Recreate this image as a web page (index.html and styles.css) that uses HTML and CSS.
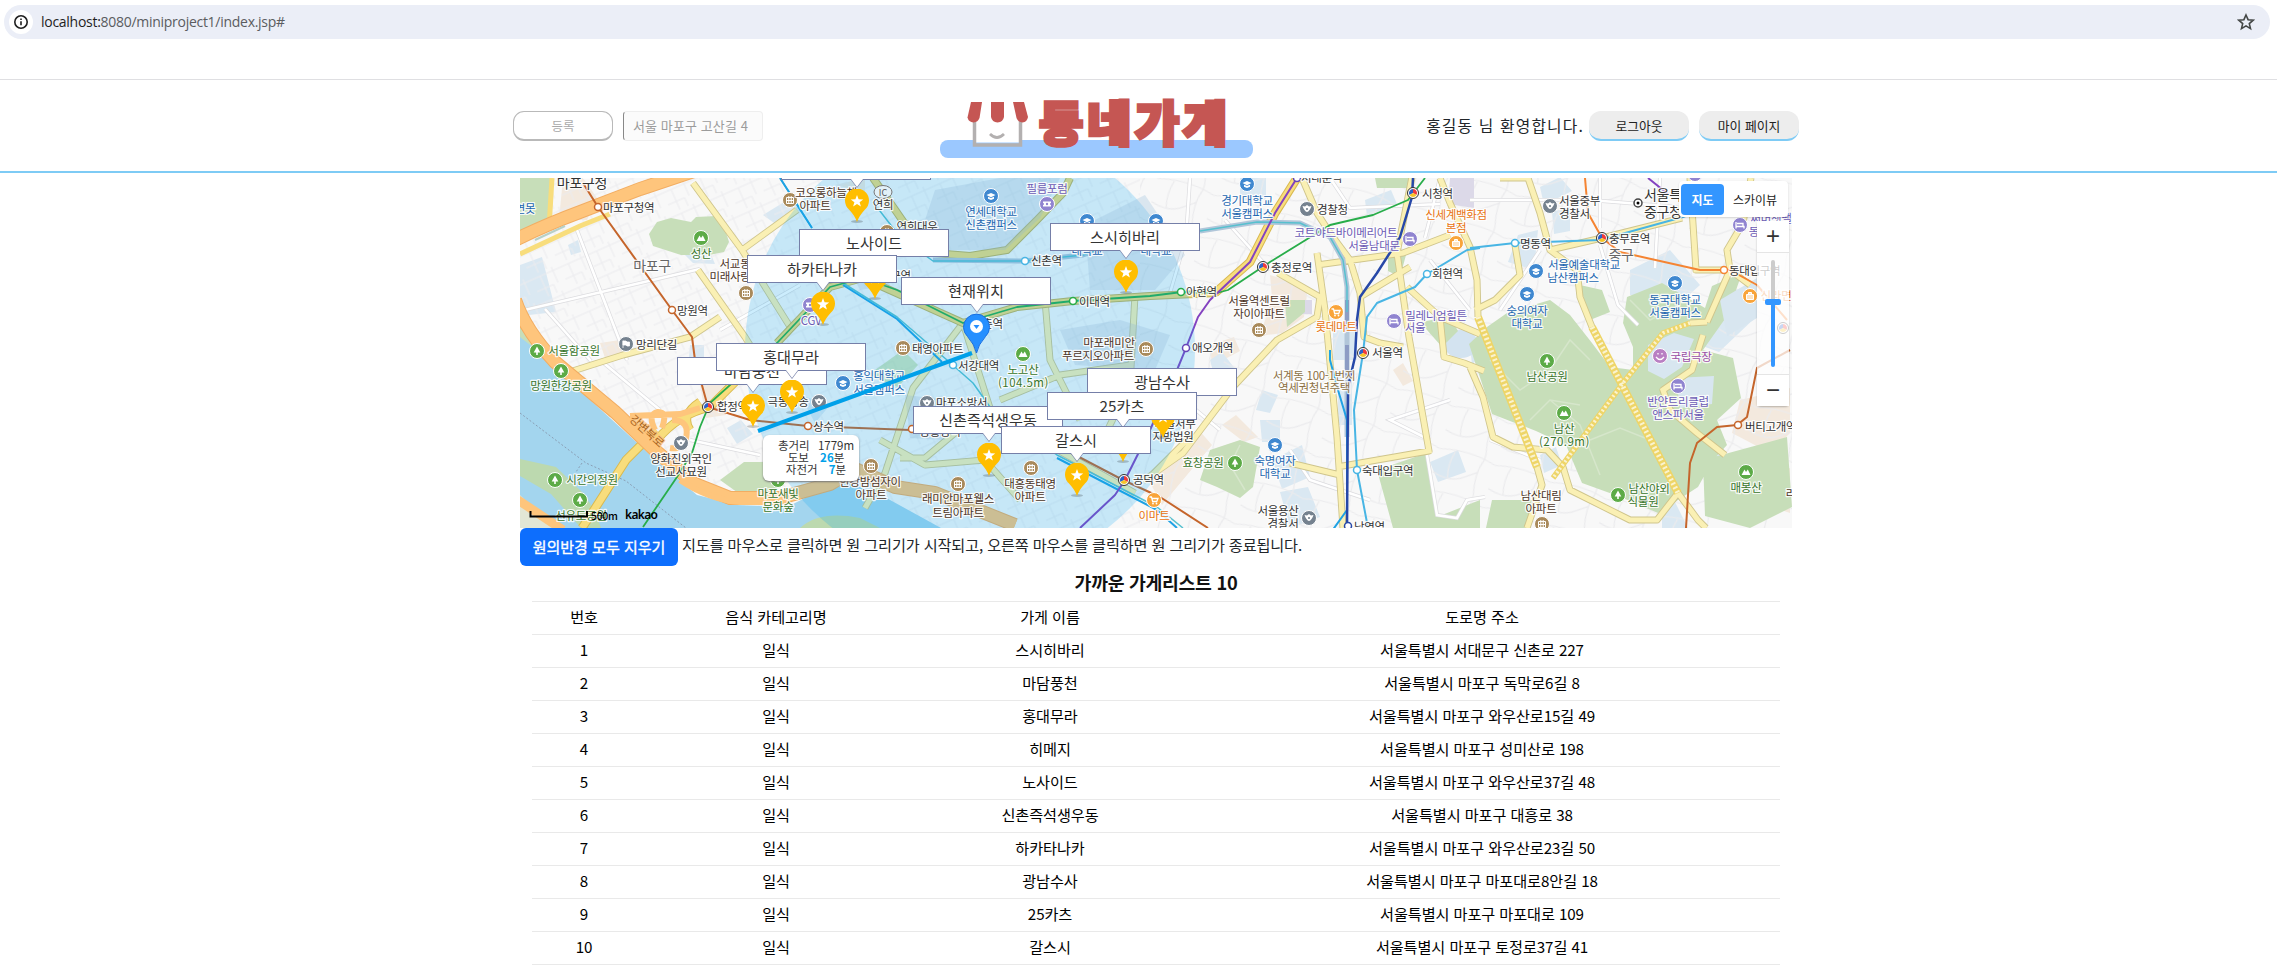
FILE: index.html
```html
<!DOCTYPE html>
<html lang="ko">
<head>
<meta charset="utf-8">
<title>동네가게</title>
<link rel="stylesheet" href="styles.css">
</head>
<body>
<div class="browser-bar">
  <div class="address">
    <span class="info"><svg width="16" height="16" viewBox="0 0 16 16"><circle cx="8" cy="8" r="6.2" fill="none" stroke="#1f1f1f" stroke-width="1.6"/><path d="M8 7.2v4M8 4.4v1.6" stroke="#1f1f1f" stroke-width="1.6"/></svg></span>
    <span class="url"><b>localhost:</b>8080/miniproject1/index.jsp#</span>
    <svg class="star" width="18" height="18" viewBox="0 0 18 18"><path d="M9 2l2.100 4.700 5.100.5-3.900 3.400 1.200 5L9 12.900 4.500 15.600l1.200-5L1.800 7.200l5.100-.5z" fill="none" stroke="#444746" stroke-width="1.600"/></svg>
  </div>
</div>
<header class="site-header">
  <div class="header-inner">
    <div class="left">
      <button class="btn-add">등록</button>
      <div class="addr-input">서울 마포구 고산길 4</div>
    </div>
    <svg class="logo" width="314" height="60" viewBox="940 100 314 60">
      <rect x="940" y="140" width="313" height="18" rx="8" fill="#9bc8ff"/>
      <rect x="976" y="120" width="43" height="22.500" fill="#fff"/>
      <path d="M974.500 120v25h46v-25" fill="none" stroke="#b3b0b0" stroke-width="3.500"/>
      <path d="M990 134q7 7 14 0" fill="none" stroke="#b3b0b0" stroke-width="2.800"/>
      <g fill="#c55653"><path d="M971 102h11l-2.500 16q-1.500 4-6 4.500-5-.5-6-5z"/><path d="M991 102h13v15q-1 5-6.500 5.500-5.500-.5-6.500-5.500z"/><path d="M1013 102h11l4 15q-1 5-5.500 5.500-4.500-.5-6-4.500z"/></g>
      <text class="logo-text" x="1039" y="141" textLength="188">동네가게</text>
    </svg>
    <div class="right">
      <span class="welcome">홍길동 님 환영합니다.</span>
      <button class="btn-pill">로그아웃</button>
      <button class="btn-pill">마이 페이지</button>
    </div>
  </div>
</header>
<main class="content">
<div class="map">
<svg class="map-canvas" width="1272" height="350" viewBox="520 178 1272 350">
  <defs>
    <pattern id="st1" width="31" height="26" patternUnits="userSpaceOnUse" patternTransform="rotate(-24)"><path d="M0 4H31M0 17H18M9 4V26M23 0V17M18 17V26" fill="none" stroke="#ebebee" stroke-width="1"/></pattern>
    <pattern id="st2" width="58" height="44" patternUnits="userSpaceOnUse" patternTransform="rotate(17)"><path d="M0 8Q30 0 58 8M0 32Q20 38 32 28M16 6Q12 20 16 34M46 0V6Q40 22 46 44M32 28L43 20" fill="none" stroke="#ebebed" stroke-width="1.200"/></pattern>
    <g id="school"><circle r="7.500" fill="#3f88d0" stroke="#fff"/><path d="M-4.500-1L0-3 4.500-1 0 1.200zM-3 .7v2L0 4l3-1.300v-2L0 2z" fill="#fff"/></g>
    <g id="apt"><circle r="7.500" fill="#a98a5b" stroke="#fff"/><path d="M-3.500-2.500h7v6h-7zM-1.200-4v7.500M1.200-4v7.500M-3.500.5h7" fill="none" stroke="#fff"/></g>
    <g id="tree"><circle r="7.500" fill="#5cab47" stroke="#fff"/><path d="M0-4.500L3.300 1.500H.8v2.500H-.8V1.500h-2.500z" fill="#fff"/></g>
    <g id="hill"><circle r="7.500" fill="#5cab47" stroke="#fff"/><path d="M-4.500 3L-1.500-2.500 0 0 1.800-2.500 4.500 3z" fill="#fff"/></g>
    <g id="cart"><circle r="7.500" fill="#f9a43a" stroke="#fff"/><path d="M-4.500-3h2l1.200 4.500h4L4-1.500h-6" fill="none" stroke="#fff" stroke-width="1.300"/><circle cx="-1" cy="3.500" r=".9" fill="#fff"/><circle cx="2.500" cy="3.500" r=".9" fill="#fff"/></g>
    <g id="bag"><circle r="7.500" fill="#f9a43a" stroke="#fff"/><path d="M-3.500-1.500h7v5h-7zM-1.500-1.500v-2h3v2" fill="#fff" stroke="#fff" fill-opacity=".7"/></g>
    <g id="bed"><circle r="7.500" fill="#9084d0" stroke="#fff"/><path d="M-4-3v6.500M-4 1.500h8v2M-3-1.500h6V1" fill="none" stroke="#fff" stroke-width="1.300"/></g>
    <g id="police"><circle r="7.500" fill="#75828f" stroke="#fff"/><path d="M-4.500-3l2.500.5L0-4 2-2.500l2.500-.5-1 2.500L2.500 1Q0 5-2.500 1l-1-1.500z" fill="#fff"/><circle r="1.100" fill="#75828f"/></g>
    <g id="flag"><circle r="7.500" fill="#75828f" stroke="#fff"/><path d="M-3-3.500v7.500M-3-3h3l1 1h2.500v4H1l-1-1h-3z" fill="#fff" stroke="#fff" stroke-width=".8"/></g>
    <g id="ticket"><circle r="7.500" fill="#9084d0" stroke="#fff"/><path d="M-4-2.500h8v1.500a1 1 0 0 0 0 2v1.500h-8V1a1 1 0 0 0 0-2z" fill="#fff"/><circle r="1.200" fill="#9084d0"/></g>
    <g id="hub"><circle r="5.500" fill="#fff" stroke="#333"/><path d="M0-4A4 4 0 0 0-3.500 2L0 0z" fill="#2c62c9"/><path d="M0-4A4 4 0 0 1 3.500 2L0 0z" fill="#ee3b3b"/><path d="M3.500 2A4 4 0 0 1-3.500 2L0 0z" fill="#f6c426"/></g>
  </defs>
  <rect x="520" y="178" width="1272" height="350" fill="#f8f8f8"/>
  <!-- land use -->
  <g fill="#f3e9de"><path d="M563 178h20l14 20-10 22h-28zM700 385h26v30l-20 3zM600 343l20-3 10 15-25 3zM835 185l30-7v14zM1270 275l38 12-4 30-22 16-22 3 12-38zM1210 345l24-8 6 14-28 15zM1168 455l30-26 14 16-50 60-16-30zM1740 400l50-12v45l-20 20-38-20zM1760 478l30-10v45l-30-10zM1222 425l14-10 22 22-14 5zM1393 370l10-7 10 18-10 5z"/></g>
  <g fill="#dae8f2"><path d="M520 265l22-8 14 55-36 4zM568 245l10-5 3 12-10 3zM763 215l26-16 14 12-26 14zM680 250l30 2 5 12-22-1zM727 428l14-8 12 14-16 10zM690 345h14v25h-16zM800 395l30 10-15 18zM1240 178h26v22h-26zM1365 200l26-10 6 14-30 12zM1333 325h24v35h-24zM1338 370h14v55h-14zM1262 390l16 5-8 18-14-3zM1260 420h20v22h-18zM1272 460l30-15 8 32-28 12zM1280 492l28-5 12 30-30 11zM1210 360l12-8 14 18-22 5zM1430 462l28-12 8 22-28 10zM1518 235l20-5-4 40-26-8zM1552 212l18-5v24l-16 3zM1630 270l40-20 30 35-20 18-50-8zM1735 290l22-6v32l-38 36-22-8 22-26zM1661 350l26-12 8 14-28 40-14-20 20-6zM1690 380l24 0-4 30-30 3-10-25zM1700 445l18-8 10 20-22 8zM1662 505l12-5 14 28h-26zM1540 455l16-8 6 18-18 8zM1470 345l12 8-10 12zM1540 187l20-10 12 14-28 14z"/></g>
  <rect x="520" y="178" width="620" height="350" fill="url(#st1)"/>
  <rect x="1140" y="178" width="652" height="350" fill="url(#st2)"/>
  <ellipse cx="1461" cy="344" rx="17" ry="14" fill="#d3e3f0"/>
  <g fill="#dcd9e8"><path d="M1450 178h24v30l-26-4zM1300 300h12v14h-12z"/></g>
  <g fill="#c7deb9"><path d="M520 178h32v52l-32 10zM520 325l20 10 15 25-35-18zM657 222l14-4 20 4 5-5 20-1 8 10 5 16-5 10-15 3-28 0-28-9-4-12zM1375 178h38v10h-36zM1388 255h18l-6 22-12-6zM1285 300h20v12l-18 15zM1420 322l30-5 8 14-16 16zM720 480l24-18h30l4 32-30 6zM1200 480l10-30 30-10 20 7-7 40-13 11-23-11zM1377 470l50-17 10 64 43-17v28h-87zM1487 327l20-14 43-13 20 15 22 28 18 24 23 3v-23l-10-24 4-26 35-14 43 25 7-22 30-13-15 43-24 34 30 8 8 40-24 22 10 25-14 15-15 27-40 26-40-17-36-13-16-38-30-14-44-17-23-70zM1703 460l84-23 5 70-42 21-45-12zM1492 500h40l-6 28h-40zM1580 285l22 5 8 22-20 8z"/></g>
  <g fill="none" stroke="#d6e6cb" stroke-width="1.500"><path d="M1490 360l30 30 30-20 20-30 20 20M1550 400l30 25 20 50M1630 300l20 20 30-15M1240 445l-10 20 15 25M1530 420l20-20 30 5M1590 440l30-12 25 10"/></g>
  <g fill="#d8e6f0"><path d="M1648 345l26-12 20 6-12 28-18 12-16-8zM1676 378l38-2-2 28-32 4zM1720 300l37-22v40l-30 18z"/></g>
  <!-- river and islands -->
  <path d="M520 337l23 18 44 42 46 42 26 24 38 32 40 10 50 2 54-27 40 15 60 33H520z" fill="#a3d5ee"/>
  <path d="M520 459l36 8 27 26 12 18 6 17h-20l-30-34-31-18zM800 528q20-18 60-10l20 10z" fill="#bcd9af"/>
  <path d="M520 495l34 33h-34z" fill="#e2e6d5"/>
  <g fill="none" stroke="#8a9fb5" stroke-dasharray="2 2"><path d="M520 413l66 50 40 18 60 47M582 463l-8 12"/></g>
  <!-- minor roads -->
  <defs><path id="minor" d="M520 311l180-42M545 309l46 52M577 230l50 130M600 360l60 50M720 330l80-45M690 440l70 15M1440 178l-15 60M1470 200h120l100 8M1330 178l20 30 90-4M1600 178v50M1660 178l-5 90M1490 440l50 20M1190 178l-4 60-16 55M1225 220l45 50M1160 380l60 50M1290 450l20 30 60 20M1430 260l40 50M1540 250l-40 60M1450 400l-60 20 40 20M1427 455l10 60 20 3 10-18 18-3M1600 245l18 60 20 20"/></defs>
  <use href="#minor" fill="none" stroke="#dcdcdf" stroke-width="4"/>
  <use href="#minor" fill="none" stroke="#fff" stroke-width="2.600"/>
  <!-- main roads: casing then fill -->
  <g fill="none" stroke="#cfc58c" stroke-width="7" stroke-linejoin="round"><path id="roads" d="M693 183l49 67 55-40M742 250l50 80M698 270l47 67 25 40M560 375l63-20 67-18 30-20M963 323l-50 65-28 85-20 35M963 323l27 85 55 35 90 50M880 440l45 25 60-5 35 40M985 408l-60 50-25 0M1000 400l60-25 70-10M1045 300l5 60 30 60M1135 295l-5 90-30 60M1302 178l15 35 13 20 20 27 10 33 4 44 16 6 23 4M1317 265l86-12 47-18M1278 273l42 24-3 20-40 23-44 47-50 66-40 28M1317 253l8 57 12 127 6 91M1290 463l50 12M1337 467l92-16-20-114-12-84 15-76M1360 297l50-30M1407 287l33 30 40 17M1440 317l4 40 20 6 20 8M1450 203l20 44 7 33 1 37M1450 203l-10-25M1537 467l5 18-15 43M1528 178l12 35 10 37 27 20 3 27 12 30M1550 250l52-12 80-20M1678 493l20 27 8 8M1707 322l-17 1M1707 322l23-52-3-20 16-27 8-45M1690 178l6 92 34 0 20 15M1703 335l-11 35-29 20 7 20 27 23 28 22M1470 367l13 30 10 40 20 10 34 3 16 17 7 23 60 30 27 0 21-27M1530 178l-30 0M1515 245l5 30-25 25-20 10M1150 477l40-40"/></g>
  <use href="#roads" fill="none" stroke="#faf0b4" stroke-width="5.200"/>
  <g fill="none" stroke="#c3b45c" stroke-width="8"><path id="avenue" d="M777 343l53-56 33-9 100 45 54-16 56-6 77-5 67-3M873 178l34 49 26 26 37 3 37-6 30-30 26-27 7-15"/></g>
  <use href="#avenue" fill="none" stroke="#f0dc7c" stroke-width="6"/>
  <g fill="none" stroke="#eed568"><path d="M1478 317l59 150M1592 327l86 166" stroke-width="8"/><path d="M1690 323l-27 10-40 50-70 95" stroke-width="5.500"/></g>
  <g fill="none" stroke="#faf3cf" stroke-dasharray="2 2.500"><path d="M1478 317l59 150M1592 327l86 166" stroke-width="5"/><path d="M1690 323l-27 10-40 50-70 95" stroke-width="3.500"/></g>
  <g fill="none" stroke="#d8b950" stroke-width="9"><path id="trunk" d="M1297 178l-22 35-25 49-35 31M656 430l-30 30-32 50-12 18M657 440q20-25 53-33l60-60M690 430q-10-15 10-28"/></g>
  <use href="#trunk" fill="none" stroke="#f8dd7c" stroke-width="7"/>
  <path d="M520 254l60-28 30-12M552 178l-3 50M520 500l45 32" fill="none" stroke="#f8dd7c" stroke-width="5"/>
  <g fill="none" stroke="#f2ad62" stroke-width="14"><path id="ex" d="M515 240q30-15 65-28l60-23 60-20M515 300q10 30 40 62l60 50 42 40 38 32 35 14h50l50-14 25-15 40 18 40 6 50 20 30 12"/></g>
  <use href="#ex" fill="none" stroke="#fec57c" stroke-width="12"/>
  <path d="M515 498l30 20 18 12" fill="none" stroke="#fec57c" stroke-width="9"/>
  <path d="M680 480q30 20 60 22h30M630 416l50-2 20-6M655 430q-8-16 3-18 10 0 4 16M672 420q18 0 14 18-4 12-16 10" fill="none" stroke="#fec57c" stroke-width="6"/>
  <path d="M535 240l30-14" stroke="#b7d0c6" stroke-width="2"/>
  <!-- rail -->
  <g fill="none" stroke-linejoin="round">
    <path d="M1200 231l57-9 43 1 30 14 13 23 4 27v150M933 260l92 1 58-6 60-20 57-4" stroke="#b1c6d9" stroke-width="5"/>
    <path d="M1347 300v30M1347 345v30" stroke="#8c9cc4" stroke-width="4"/>
    <path d="M780 178l32 50M873 202l27 35 33 24 92 0 58-6 60-20 57-4 57-9 43 1 30 14 13 23 4 27v25M843 283l54 34 50 43 26 23 17 24 67 48 100 52 26 21" stroke="#57c0cf" stroke-width="1.500"/>
    <path d="M780 178l32 50M843 285l54 34 45 43M1330 350v10l8 30 9 30v90l-20 28M1057 458l100 52 20 18" stroke="#1fa2e4" stroke-width="2"/>
    <path d="M1413 178l-1 19-12 40-23 36-17 24-3 23-2 37-7 30-1 141" stroke="#2748a8" stroke-width="2.500"/>
    <path d="M1425 178l-17 22-35 15-43 10-60 37-42 28-11 3-35-1-32 4-77 5-56 6-54 16-66-33-34-12-33 9-53 56-67 60-10 24-8 26-15 24-34 50" stroke="#28ad4a" stroke-width="1.800"/>
    <path d="M1297 178l-22 35-25 49-40 38-12 17-12 31-9 22-27 60-25 50-10 15-35 33M1648 178l20 16" stroke="#8442c0" stroke-width="2"/>
    <path d="M1480 248l-13 2-40 24-12 13-38 16-10 14-4 36-9 57 3 60 11 58M1470 248l45-5 85-3 83-23 30-12" stroke="#48b5e4" stroke-width="2"/>
    <path d="M1585 178l3 35 14 25 18 14 80 18h30l27 15 30 35" stroke="#f58432" stroke-width="2"/>
    <path d="M1790 350l-33 18-10 49-10 8-20 2-20 16-7 20-4 65M583 183l15 24 74 103 20 27 3 23 13 47 42 13 58 6 102 4M1060 447l63 33 37 17 48 31" stroke="#c5652b" stroke-width="2"/>
  </g>
  <!-- search radius and walking line -->
  <circle cx="970" cy="350" r="225" fill="#00a6f5" fill-opacity=".2"/>
  <g fill="#8db8d8" fill-opacity=".28"><path d="M935 190l65-12 60 0-20 40-35 32-60 0-20-30zM1085 225l60-30 40 60-30 35-65 0zM1060 330l60-10 50 15-15 35-80-5zM905 395l45 5-5 40-35-2zM850 270l30-5 10 20-30 5z"/></g>
  <path d="M868 375l35-25 15 15-20 22z" fill="#86c99c" fill-opacity=".5"/>
  <!-- stations -->
  <g fill="#fff" stroke-width="1.500"><g stroke="#c5652b"><circle cx="598" cy="207" r="3.500"/><circle cx="672" cy="310" r="3.500"/><circle cx="808" cy="426" r="3.500"/><circle cx="912" cy="429" r="3.500"/><circle cx="1738" cy="425" r="3.500"/></g><g stroke="#28ad4a"><circle cx="1073" cy="301" r="3.500"/><circle cx="1181" cy="292" r="3.500"/></g><g stroke="#48b5e4"><circle cx="1025" cy="261" r="3.500"/><circle cx="953" cy="365" r="3.500"/><circle cx="1427" cy="274" r="3.500"/><circle cx="1515" cy="243" r="3.500"/><circle cx="1357" cy="470" r="3.500"/></g><g stroke="#6644b8"><circle cx="1186" cy="348" r="3.500"/><circle cx="1297" cy="178" r="3.500"/></g><circle cx="1348" cy="526" r="3.500" stroke="#2748a8"/><circle cx="1724" cy="270" r="3.500" stroke="#f58432"/><circle cx="1638" cy="203" r="4" stroke="#444"/></g><circle cx="1638" cy="203" r="1.500"/>
  <use href="#hub" x="708" y="407"/><use href="#hub" x="1124" y="480"/><use href="#hub" x="1263" y="267"/><use href="#hub" x="1413" y="193"/><use href="#hub" x="1363" y="353"/><use href="#hub" x="1602" y="238"/><use href="#hub" x="1783" y="328"/>
  <!-- points of interest -->
  <use href="#hill" x="701" y="238"/><use href="#apt" x="790" y="200"/><use href="#apt" x="746" y="293"/><use href="#tree" x="537" y="351"/><use href="#tree" x="561" y="371"/><use href="#tree" x="555" y="480"/><use href="#tree" x="580" y="500"/><use href="#flag" x="626" y="344"/><use href="#police" x="681" y="443"/><use href="#ticket" x="810" y="305"/><use href="#tree" x="778" y="480"/>
  <use href="#school" x="991" y="196"/><use href="#ticket" x="1047" y="204"/><use href="#school" x="1087" y="221"/><use href="#school" x="1156" y="221"/><use href="#apt" x="903" y="348"/><use href="#hill" x="1023" y="354"/><use href="#apt" x="1146" y="349"/><use href="#school" x="843" y="383"/><use href="#police" x="819" y="402"/><use href="#police" x="927" y="403"/><use href="#apt" x="871" y="466"/><use href="#apt" x="958" y="484"/><use href="#apt" x="1031" y="468"/><use href="#cart" x="1154" y="500"/><use href="#apt" x="887" y="232"/>
  <use href="#school" x="1247" y="184"/><use href="#police" x="1307" y="209"/><use href="#bed" x="1410" y="239"/><use href="#bag" x="1456" y="243"/><use href="#cart" x="1336" y="312"/><use href="#bed" x="1394" y="321"/><use href="#apt" x="1259" y="330"/><use href="#school" x="1275" y="445"/><use href="#tree" x="1235" y="463"/><use href="#police" x="1309" y="518"/>
  <use href="#police" x="1550" y="206"/><use href="#school" x="1536" y="271"/><use href="#school" x="1527" y="294"/><use href="#school" x="1675" y="283"/><use href="#bag" x="1750" y="296"/><use href="#bed" x="1740" y="225"/><use href="#bed" x="1695" y="174"/><use href="#tree" x="1547" y="361"/><use href="#hill" x="1564" y="413"/><use href="#bed" x="1678" y="386"/><use href="#tree" x="1618" y="495"/><use href="#hill" x="1746" y="472"/><use href="#apt" x="1542" y="524"/>
  <circle cx="1660" cy="356" r="7.500" fill="#b97fc3" stroke="#fff"/><path d="M1656 357q4 5 8 0M1658 353v1.500M1662 353v1.500" fill="none" stroke="#fff" stroke-width="1.300"/>
  <ellipse cx="883" cy="192" rx="9" ry="6.500" fill="#e2f1f8" stroke="#777"/><text class="ic" x="883" y="195.500">IC</text>
  <!-- labels -->
  <g class="labels">
    <text class="big" x="582" y="188">마포구청</text><text class="big gray" x="652" y="271">마포구</text><text class="big gray" x="1621" y="260">중구</text>
    <g class="s"><text x="603" y="212">마포구청역</text><text x="677" y="315">망원역</text><text x="636" y="349">망리단길</text><text x="717" y="411">합정역</text><text x="813" y="431">상수역</text><text x="1031" y="265">신촌역</text><text x="1079" y="306">이대역</text><text x="972" y="328">신촌역</text><text x="958" y="370">서강대역</text><text x="1186" y="296">아현역</text><text x="1192" y="352">애오개역</text><text x="1133" y="484">공덕역</text><text x="1271" y="272">충정로역</text><text x="1317" y="214">경찰청</text><text x="1422" y="198">시청역</text><text x="1432" y="278">회현역</text><text x="1372" y="357">서울역</text><text x="1362" y="475">숙대입구역</text><text x="1354" y="531">남영역</text><text x="1301" y="182">서대문역</text><text x="1520" y="248">명동역</text><text x="1609" y="243">충무로역</text><text x="1729" y="275">동대입구역</text><text x="1745" y="431">버티고개역</text><text x="912" y="353">태영아파트</text><text x="936" y="407">마포소방서</text><text x="1559" y="205">서울중부</text><text x="1559" y="218">경찰서</text></g>
    <text class="s big" x="1644" y="200">서울특별시</text><text class="s big" x="1644" y="217">중구청</text>
    <g class="m"><text x="1175" y="428">서울서부</text><text x="1173" y="441">지방법원</text><text x="681" y="463">양화진외국인</text><text x="681" y="476">선교사묘원</text><text x="1278" y="515">서울용산</text><text x="1283" y="528">경찰서</text><text x="788" y="406">극동방송</text><text x="883" y="209">연희</text><text x="917" y="231">연희대우</text><text x="885" y="280">홍대입구역</text><text x="940" y="436">광흥창역</text></g>
    <g class="m brown"><text x="826" y="197">코오롱하늘채</text><text x="815" y="210">아파트</text><text x="735" y="268">서교동</text><text x="730" y="281">미래사랑</text><text x="1109" y="347">마포래미안</text><text x="1098" y="360">푸르지오아파트</text><text x="870" y="486">한강밤섬자이</text><text x="871" y="499">아파트</text><text x="958" y="503">래미안마포웰스</text><text x="958" y="517">트림아파트</text><text x="1030" y="488">대흥동태영</text><text x="1030" y="501">아파트</text><text x="1259" y="305">서울역센트럴</text><text x="1259" y="318">자이아파트</text><text x="1541" y="500">남산대림</text><text x="1541" y="513">아파트</text><text x="1791" y="498">라</text></g>
    <g class="m tan"><text x="1314" y="380">서계동 100-1번지</text><text x="1314" y="392">역세권청년주택</text></g>
    <g class="m green"><text x="701" y="258">성산</text><text x="574" y="355">서울함공원</text><text x="561" y="390">망원한강공원</text><text x="592" y="484">시간의정원</text><text x="581" y="520">선유도공원</text><text x="778" y="498">마포새빛</text><text x="778" y="511">문화숲</text><text x="1023" y="374">노고산</text><text x="1023" y="387" textLength="50">(104.5m)</text><text x="1203" y="467">효창공원</text><text x="1547" y="381">남산공원</text><text x="1564" y="433">남산</text><text x="1564" y="446" textLength="50">(270.9m)</text><text x="1649" y="493">남산야외</text><text x="1643" y="506">식물원</text><text x="1746" y="492">매봉산</text></g>
    <g class="m blue"><text x="525" y="213">연못</text><text x="991" y="216">연세대학교</text><text x="991" y="229">신촌캠퍼스</text><text x="879" y="380">홍익대학교</text><text x="879" y="394">서울캠퍼스</text><text x="1087" y="255">대학교</text><text x="1156" y="255">대학교</text><text x="1247" y="205">경기대학교</text><text x="1247" y="218">서울캠퍼스</text><text x="1275" y="465">숙명여자</text><text x="1275" y="478">대학교</text><text x="1584" y="269">서울예술대학교</text><text x="1573" y="282">남산캠퍼스</text><text x="1527" y="315">숭의여자</text><text x="1527" y="328">대학교</text><text x="1675" y="304">동국대학교</text><text x="1675" y="317">서울캠퍼스</text></g>
    <g class="m purple"><text x="1047" y="193">필름포럼</text><text x="811" y="325">CGV</text><text x="1346" y="237">코트야드바이메리어트</text><text x="1374" y="250">서울남대문</text><text x="1436" y="320">밀레니엄힐튼</text><text x="1415" y="332">서울</text><text x="1691" y="361" class="pink">국립극장</text><text x="1678" y="406">반얀트리클럽</text><text x="1678" y="419">앤스파서울</text><text x="1771" y="223">써머셋팰</text><text x="1754" y="236">동</text></g>
    <g class="m orange"><text x="1456" y="219">신세계백화점</text><text x="1456" y="232">본점</text><text x="1336" y="331">롯데마트</text><text x="1154" y="520">이마트</text><text x="1776" y="300">신라면</text></g>
    <text class="m road" transform="translate(644 434) rotate(42)">강변북로</text>
  </g>
  <path d="M758 431L972 353" stroke="#00a0e9" stroke-width="4"/>
  <path d="M530.500 511v5.500H587V511" fill="none" stroke="#000" stroke-width="2"/>
  <text x="591" y="520" class="scale-text">500m</text>
  <text x="625" y="519" class="kakao" textLength="33">kakao</text>
  <symbol id="pin" viewBox="0 0 24 34" width="24" height="34"><ellipse cx="12" cy="32.500" rx="6" ry="1.500" fill="#000" opacity=".2"/><path d="M12 33Q10 27 4 20.500A12 12 0 1 1 20 20.500Q14 27 12 33z" fill="#ffbe00"/><path d="M12 6l1.600 4.200 4.600.2-3.600 2.800 1.300 4.400-3.900-2.500-3.900 2.500 1.300-4.400-3.600-2.800 4.600-.2z" fill="#fff"/></symbol>
</svg>
  <div class="place" style="left:261px;top:-26px"><span>히메지</span><svg><use href="#pin"/></svg></div>
  <div class="place" style="left:279px;top:51px"><span>노사이드</span><svg><use href="#pin"/></svg></div>
  <div class="place" style="left:227px;top:77px"><span>하카타나카</span><svg><use href="#pin"/></svg></div>
  <div class="place" style="left:530px;top:45px"><span>스시히바리</span><svg><use href="#pin"/></svg></div>
  <div class="place" style="left:157px;top:179px"><span>마담풍천</span><svg><use href="#pin"/></svg></div>
  <div class="place" style="left:196px;top:165px"><span>홍대무라</span><svg><use href="#pin"/></svg></div>
  <div class="place" style="left:393px;top:228px"><span>신촌즉석생우동</span><svg><use href="#pin"/></svg></div>
  <div class="place" style="left:567px;top:190px"><span>광남수사</span><svg><use href="#pin"/></svg></div>
  <div class="place" style="left:527px;top:214px"><span>25카츠</span><svg><use href="#pin"/></svg></div>
  <div class="place" style="left:481px;top:248px"><span>갈스시</span><svg><use href="#pin"/></svg></div>
  <div class="place here" style="left:381px;top:99px"><span>현재위치</span><svg viewBox="0 0 27 41"><path d="M13.500 40Q12 32 4.500 23.500A13 13 0 1 1 22.500 23.500Q15 32 13.500 40z" fill="#258fff" stroke="#1a6fe0"/><circle cx="13.500" cy="13.500" r="6.500" fill="#fff"/><path d="M10.500 12h6l-3 4z" fill="#258fff"/></svg></div>
  <div class="distance"><p>총거리 <span>1779m</span></p><p>도보 <b>26</b>분</p><p>자전거 <b>7</b>분</p></div>
  <div class="map-type"><span class="on">지도</span><span>스카이뷰</span></div>
  <div class="zoom"><div class="zbtn">+</div><div class="track"><i></i><em></em></div><div class="zbtn">−</div></div>
</div>
<div class="actions"><button class="btn-primary">원의반경 모두 지우기</button><span>지도를 마우스로 클릭하면 원 그리기가 시작되고, 오른쪽 마우스를 클릭하면 원 그리기가 종료됩니다.</span></div>
<h2 class="list-title">가까운 가게리스트 10</h2>
<table class="shops">
  <colgroup><col class="c1"><col class="c2"><col class="c3"><col></colgroup>
  <tr><td>번호</td><td>음식 카테고리명</td><td>가게 이름</td><td>도로명 주소</td></tr>
  <tr><td>1</td><td>일식</td><td>스시히바리</td><td>서울특별시 서대문구 신촌로 227</td></tr>
  <tr><td>2</td><td>일식</td><td>마담풍천</td><td>서울특별시 마포구 독막로6길 8</td></tr>
  <tr><td>3</td><td>일식</td><td>홍대무라</td><td>서울특별시 마포구 와우산로15길 49</td></tr>
  <tr><td>4</td><td>일식</td><td>히메지</td><td>서울특별시 마포구 성미산로 198</td></tr>
  <tr><td>5</td><td>일식</td><td>노사이드</td><td>서울특별시 마포구 와우산로37길 48</td></tr>
  <tr><td>6</td><td>일식</td><td>신촌즉석생우동</td><td>서울특별시 마포구 대흥로 38</td></tr>
  <tr><td>7</td><td>일식</td><td>하카타나카</td><td>서울특별시 마포구 와우산로23길 50</td></tr>
  <tr><td>8</td><td>일식</td><td>광남수사</td><td>서울특별시 마포구 마포대로8안길 18</td></tr>
  <tr><td>9</td><td>일식</td><td>25카츠</td><td>서울특별시 마포구 마포대로 109</td></tr>
  <tr><td>10</td><td>일식</td><td>갈스시</td><td>서울특별시 마포구 토정로37길 41</td></tr>
</table>
</main>
</body>
</html>
```
FILE: styles.css
```css
* { box-sizing: border-box; }
body { margin: 0; background: #fff; color: #212529; font-family: "Noto Sans CJK KR", sans-serif; font-size: 15.3px; overflow: hidden; }
button { font-family: inherit; padding: 0; }
.browser-bar { height: 80px; padding: 5px 7px 0 4px; border-bottom: 1px solid #dfdfe2; }
.address { display: flex; align-items: center; height: 34px; border-radius: 17px; background: #ebeef7; padding: 0 15px 0 5px; }
.info { width: 24px; height: 24px; border-radius: 50%; background: #fff; display: grid; place-items: center; }
.url { flex: 1; margin-left: 8px; padding-bottom: 1px; font: 14px "Open Sans", "Noto Sans", sans-serif; letter-spacing: -.28px; color: #5a5c60; }
.url b { font-weight: 400; color: #1f1f1f; }
.site-header { height: 93px; border-bottom: 2px solid #7ecbf5; }
.header-inner { width: 1286px; margin-left: 513px; height: 91px; padding-top: 20px; display: grid; grid-template-columns: 427px 314px 1fr; }
.left { display: flex; gap: 10px; padding-top: 11px; }
.btn-add { width: 100px; height: 30px; border: 1px solid #b9b9b9; border-width: 1px 1px 2px; border-radius: 11px; background: #fff; color: #aaa; font-size: 12.500px; }
.addr-input { width: 140px; height: 30px; border: 1px solid #eee; border-left-color: #888; border-radius: 4px; background: #fbfbfb; color: #9b9b9b; font-size: 13px; line-height: 28px; padding-left: 9px; letter-spacing: .1px; white-space: nowrap; }
.logo { display: block; overflow: visible; }
.logo-text { font-size: 48px; font-weight: 900; fill: #c55653; stroke: #c55653; stroke-width: 3.500px; }
.right { display: flex; justify-content: flex-end; gap: 10px; padding-top: 11px; }
.welcome { font-size: 15.800px; line-height: 29px; margin-right: -5px; letter-spacing: 1.150px; white-space: nowrap; }
.btn-pill { width: 100px; height: 30px; border: 0; border-bottom: 2px solid #7ecbf5; border-radius: 12px; background: #ededed; font-size: 12.800px; color: #222; }
.content { width: 1272px; margin: 5px 0 0 520px; }
.map { position: relative; width: 1272px; height: 350px; overflow: hidden; }
.map-canvas { display: block; }
.labels text { font-size: 11.500px; letter-spacing: -.3px; fill: #333; paint-order: stroke; stroke: #fff; stroke-opacity: .85; stroke-width: 2.500px; stroke-linejoin: round; }
.m, .m text { text-anchor: middle; }
.ic { font-size: 9px; text-anchor: middle; fill: #555; }
.labels .big { font-size: 14px; text-anchor: middle; }
.labels .s.big { text-anchor: start; }
.labels .gray { fill: #666; }
.labels .brown text { fill: #4b3426; }
.labels .tan text { fill: #8c7044; }
.labels .green text { fill: #38752b; }
.labels .blue text { fill: #1c66b0; }
.labels .purple text { fill: #6c5bb5; }
.labels .purple .pink { fill: #9a4fa5; }
.labels .orange text { fill: #e87310; }
.labels .road { fill: #a8641e; stroke: #fec57c; }
.scale-text { font-size: 10.500px; font-weight: 500; letter-spacing: -.3px; }
.kakao { font: 600 12px "Noto Sans", sans-serif; }
.place { position: absolute; isolation: isolate; width: 150px; height: 28px; background: #fff; border: 1px solid #757fa8; text-align: center; font-size: 15.200px; line-height: 24px; color: #333; }
.place::after { content: ""; position: absolute; z-index: 1; left: 69px; top: 26px; border: 6px solid transparent; border-top: 8px solid #fff; border-bottom: 0; filter: drop-shadow(0 1px 0 #757fa8); }
.place svg { position: absolute; left: 63px; top: 36px; width: 24px; height: 34px; }
.place.here svg { left: 61px; top: 35px; width: 27px; height: 41px; }
.distance { position: absolute; left: 243px; top: 257px; width: 96px; height: 46px; border-radius: 6px; background: #fff; box-shadow: 0 1px 2px #777; padding: 4px 0 0 10px; text-align: center; font-size: 11.500px; line-height: 12px; color: #333; white-space: nowrap; }
.distance p { margin: 0; }
.distance span { margin-left: 5px; }
.distance b { color: #00a0e9; margin-left: 8px; }
.map-type { position: absolute; left: 1159px; top: 3px; width: 109px; height: 36px; padding: 2px; display: flex; align-items: center; background: #fff; border-radius: 4px; box-shadow: 0 1px 2px rgba(0,0,0,.15); font-size: 12px; line-height: 31px; text-align: center; color: #222; }
.map-type span { flex: 1; }
.map-type .on { flex: 0 0 43px; background: #3396ff; color: #fff; border-radius: 4px; font-weight: 700; }
.zoom { position: absolute; left: 1237px; top: 43px; width: 32px; height: 185px; border-radius: 4px; background: rgba(255,255,255,.75); box-shadow: 0 1px 2px rgba(0,0,0,.25); }
.zbtn { height: 31px; background: #fff; font: 24px/30px "Liberation Sans", sans-serif; text-align: center; color: #333; }
.track { height: 123px; border: solid #e5e5e5; border-width: 1px 0; display: grid; justify-items: center; align-content: start; padding-top: 7px; }
.track i { width: 4px; height: 107px; border-radius: 2px; background: linear-gradient(#ccc 40px, #3396ff 40px); }
.track em { width: 16px; height: 6px; border-radius: 2px; background: #3396ff; margin-top: -68px; }
.actions { display: flex; height: 38px; }
.btn-primary { width: 158px; height: 38px; border: 0; border-radius: 6px; background: #0d6efd; color: #fff; font-size: 15px; padding-bottom: 2px; -webkit-text-stroke: .35px #fff; }
.actions span { margin-left: 4px; line-height: 32px; font-size: 15.200px; letter-spacing: -.15px; white-space: nowrap; }
.list-title { margin: 0 0 0 12px; width: 1248px; height: 35px; font-size: 18.300px; font-weight: 700; line-height: 32px; text-align: center; color: #111; letter-spacing: -.3px; }
.shops { width: 1248px; margin-left: 12px; border-collapse: collapse; table-layout: fixed; color: #000; border-top: 1px solid #e9e9e9; }
.shops .c1 { width: 104px; }
.shops .c2 { width: 280px; }
.shops .c3 { width: 268px; }
.shops td { height: 33px; padding: 0 0 4px; border-bottom: 1px solid #e9e9e9; text-align: center; line-height: 22px; font-size: 15.200px; letter-spacing: -.1px; }
```
